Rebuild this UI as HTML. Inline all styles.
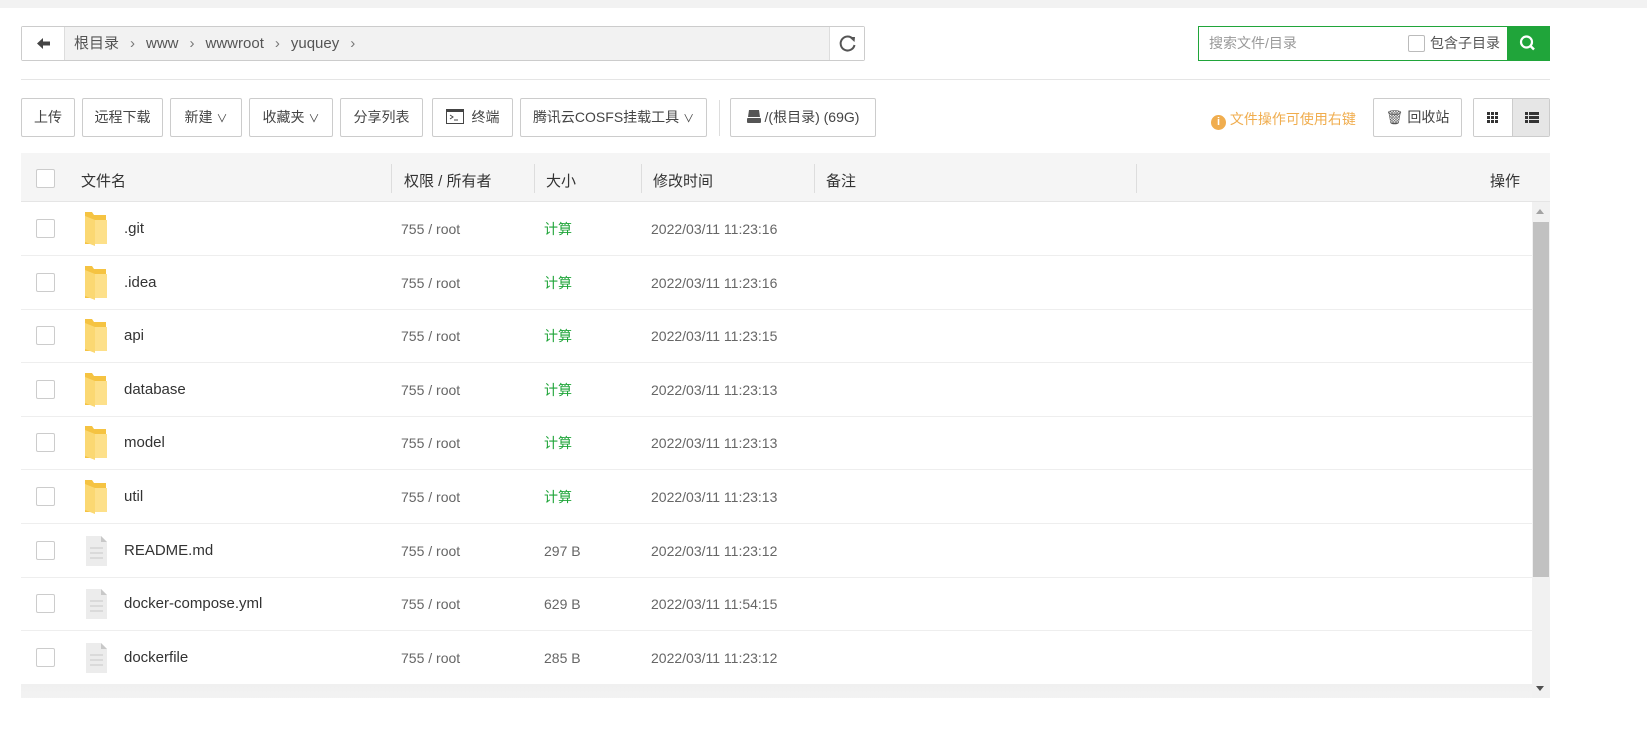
<!DOCTYPE html>
<html><head><meta charset="utf-8"><style>
*{box-sizing:border-box;margin:0;padding:0}
body{width:1647px;height:751px;background:#fff;font-family:"Liberation Sans","Noto Sans CJK SC",sans-serif;font-size:14px;color:#555;position:relative;overflow:hidden}
.abs{position:absolute}
.topbar{left:0;top:0;width:1647px;height:8px;background:#f2f2f2}
.crumb{left:21px;top:26px;width:844px;height:35px;border:1px solid #ccc;border-radius:2px;background:#f2f2f2}
.crumb .back{position:absolute;left:0;top:0;width:43px;height:33px;background:#fff;border-right:1px solid #ddd}
.crumb .ref{position:absolute;right:0;top:0;width:35px;height:33px;background:#fff;border-left:1px solid #ddd}
.crumb .path{position:absolute;left:52px;top:0;line-height:33px;color:#555;font-size:15px;white-space:nowrap}
.crumb .path span.s{color:#777;margin:0 11px}
.search{left:1198px;top:26px;width:352px;height:35px;border:1px solid #20a53a}
.search .ph{position:absolute;left:10px;top:0;line-height:33px;color:#999;font-size:14px}
.search .cb{position:absolute;left:209px;top:8px;width:17px;height:17px;border:1px solid #bbb;border-radius:2px;background:#fff}
.search .lbl{position:absolute;left:231px;top:0;line-height:33px;font-size:14px;color:#555}
.search .go{position:absolute;right:0;top:0;width:42px;height:33px;background:#20a53a}
.hr{left:21px;top:79px;width:1529px;height:1px;background:#e5e5e5}
.btn{position:absolute;top:98px;height:39px;border:1px solid #ccc;border-radius:2px;background:#fff;font-size:14px;color:#444;line-height:37px;text-align:center;white-space:nowrap}
.thead{left:21px;top:153px;width:1529px;height:49px;background:#f5f5f5;border-bottom:1px solid #e5e5e5}
.th{position:absolute;top:4px;line-height:49px;font-size:15px;color:#333}
.vd{position:absolute;top:11px;width:1px;height:29px;background:#ddd}
.cbx{position:absolute;width:19px;height:19px;border:1px solid #ccc;border-radius:2px;background:#fff}
.row{position:absolute;left:21px;width:1511px;height:54px;border-bottom:1px solid #eee}
.row .t{position:absolute;top:0;line-height:54px;font-size:14px;color:#555}
.row .nm{left:103px;color:#333;font-size:15px}
.row .pm{left:380px;color:#666}
.row .sz{left:523px;color:#666}
.row .tm{left:630px;color:#666}
.calc{color:#20a53a !important}
.sb{left:1532px;top:202px;width:18px;height:496px;background:#f1f1f1}
.thumb{left:1533px;top:222px;width:16px;height:355px;background:#c1c1c1}
</style></head><body>
<div class="abs topbar"></div>
<div class="abs crumb">
 <div class="back"><svg width="43" height="33"><path d="M15 16.5 L21 11 V14.5 H28 V18.5 H21 V22 Z" fill="#444"/></svg></div>
 <div class="path">根目录<span class="s">›</span>www<span class="s">›</span>wwwroot<span class="s">›</span>yuquey<span class="s">›</span></div>
 <div class="ref"><svg width="35" height="33"><path d="M23 12 A7 7 0 1 0 24.5 18" fill="none" stroke="#555" stroke-width="2"/><path d="M19 10 L25 10 L24.5 15 Z" fill="#555"/></svg></div>
</div>
<div class="abs search"><span class="ph">搜索文件/目录</span><div class="cb"></div><span class="lbl">包含子目录</span>
 <div class="go"><svg width="42" height="33"><circle cx="19.5" cy="15" r="5.5" fill="none" stroke="#fff" stroke-width="2.2"/><path d="M23.5 19 L27 22.5" stroke="#fff" stroke-width="2.5"/></svg></div></div>
<div class="abs hr"></div>
<div class="btn" style="left:21px;width:54px">上传</div>
<div class="btn" style="left:82px;width:81px">远程下载</div>
<div class="btn" style="left:170px;width:72px">新建 <span style="font-size:11px">∨</span></div>
<div class="btn" style="left:249px;width:84px">收藏夹 <span style="font-size:11px">∨</span></div>
<div class="btn" style="left:340px;width:83px">分享列表</div>
<div class="btn" style="left:432px;width:81px"><svg width="18" height="15" style="vertical-align:-2px;margin-right:8px"><rect x="0.5" y="0.5" width="17" height="14" fill="#fff" stroke="#444"/><rect x="0" y="0" width="18" height="3" fill="#444"/><path d="M4 6 L7 8 L4 10 M8 11 H12" stroke="#444" fill="none"/></svg>终端</div>
<div class="btn" style="left:520px;width:187px">腾讯云COSFS挂载工具 <span style="font-size:11px">∨</span></div>
<div class="abs" style="left:719px;top:100px;width:1px;height:36px;background:#ddd"></div>
<div class="btn" style="left:730px;width:146px"><svg width="14" height="14" style="vertical-align:-1px;margin-right:4px"><path d="M2 1 H12 L13 8 H1 Z" fill="#555"/><rect x="0" y="9" width="14" height="5" rx="1" fill="#555"/></svg>/(根目录) (69G)</div>
<div class="abs" style="left:1211px;top:109px;font-size:14px;color:#f0ad4e;white-space:nowrap"><span style="display:inline-block;width:15px;height:15px;border-radius:50%;background:#f0ad4e;color:#fff;font-size:11px;line-height:15px;text-align:center;font-weight:bold;vertical-align:-1px">i</span> 文件操作可使用右键</div>
<div class="btn" style="left:1373px;width:89px"><span style="color:#555">🗑</span> 回收站</div>
<div class="btn" style="left:1473px;width:77px;padding:0;overflow:hidden">
 <div style="position:absolute;left:0;top:0;width:38px;height:37px;background:#fff"><svg width="38" height="37"><g fill="#333"><rect x="13" y="13" width="3" height="3"/><rect x="17" y="13" width="3" height="3"/><rect x="21" y="13" width="3" height="3"/><rect x="13" y="17" width="3" height="3"/><rect x="17" y="17" width="3" height="3"/><rect x="21" y="17" width="3" height="3"/><rect x="13" y="21" width="3" height="3"/><rect x="17" y="21" width="3" height="3"/><rect x="21" y="21" width="3" height="3"/></g></svg></div>
 <div style="position:absolute;left:38px;top:0;width:39px;height:37px;background:#e6e6e6;border-left:1px solid #ccc"><svg width="38" height="37"><g fill="#333"><rect x="12" y="13" width="3" height="3"/><rect x="16" y="13" width="10" height="3"/><rect x="12" y="17" width="3" height="3"/><rect x="16" y="17" width="10" height="3"/><rect x="12" y="21" width="3" height="3"/><rect x="16" y="21" width="10" height="3"/></g></svg></div>
</div>
<div class="abs thead">
 <div class="cbx" style="left:15px;top:16px"></div>
 <span class="th" style="left:60px">文件名</span>
 <div class="vd" style="left:370px"></div><span class="th" style="left:383px">权限 / 所有者</span>
 <div class="vd" style="left:513px"></div><span class="th" style="left:525px">大小</span>
 <div class="vd" style="left:620px"></div><span class="th" style="left:632px">修改时间</span>
 <div class="vd" style="left:793px"></div><span class="th" style="left:805px">备注</span>
 <div class="vd" style="left:1115px"></div><span class="th" style="left:1469px">操作</span>
</div>
<div id="rows"></div>
<script>
var d=[[".git",1,"计算","16"],[".idea",1,"计算","16"],["api",1,"计算","15"],["database",1,"计算","13"],["model",1,"计算","13"],["util",1,"计算","13"],["README.md",0,"297 B","12"],["docker-compose.yml",0,"629 B","54:15"],["dockerfile",0,"285 B","12"],["",0,"",""]];
var h="";
d.forEach(function(r,i){
 var top=202+i*53.6;
 var ic=r[1]?'<svg width="26" height="36" style="position:absolute;left:62px;top:9px"><path d="M2 1 H9 L11 4 H23 V33 H2 Z" fill="#f5c342"/><path d="M2 5 L12 9 V35 L2 31 Z" fill="#fbd872"/><path d="M12 9 H24 V33 H12 Z" fill="#fde08a"/></svg>':'<svg width="24" height="32" style="position:absolute;left:64px;top:11px"><path d="M1 1 H16 L22 7 V31 H1 Z" fill="#ececec"/><path d="M16 1 L22 7 H16 Z" fill="#c8c8c8"/><path d="M5 13 H18 M5 18 H18 M5 23 H18" stroke="#cfcfcf" stroke-width="1.3"/></svg>';
 if(i==9){h+='<div class="row" style="top:'+top+'px;background:linear-gradient(#f0f0f0,#fafafa)"></div>';return;}
 h+='<div class="row" style="top:'+top+'px"><div class="cbx" style="left:15px;top:17px"></div>'+ic+'<span class="t nm">'+r[0]+'</span><span class="t pm">755 / root</span><span class="t sz'+(r[1]?' calc':'')+'">'+r[2]+'</span><span class="t tm">2022/03/11 11:'+(r[3].length>2?r[3]:'23:'+r[3])+'</span></div>';
});
document.getElementById("rows").innerHTML=h;
</script>
<div class="abs" style="left:0;top:698px;width:1647px;height:53px;background:#fff"></div>
<div class="abs sb"></div>
<div class="abs thumb"></div>
<div class="abs" style="left:1536px;top:209px;width:0;height:0;border-left:4px solid transparent;border-right:4px solid transparent;border-bottom:5px solid #a3a3a3"></div>
<div class="abs" style="left:1536px;top:686px;width:0;height:0;border-left:4px solid transparent;border-right:4px solid transparent;border-top:5px solid #505050"></div>
</body></html>
